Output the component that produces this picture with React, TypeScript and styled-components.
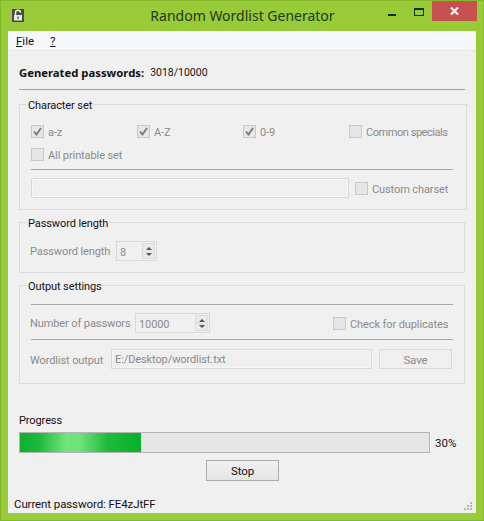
import React from "react";
import styled, { createGlobalStyle } from "styled-components";

const Global = createGlobalStyle`
  html, body {
    margin: 0;
    padding: 0;
    background: #97cb38;
  }
  * {
    box-sizing: border-box;
  }
`;

const Window = styled.div`
  width: 484px;
  height: 521px;
  display: flex;
  flex-direction: column;
  padding: 0 7px 7px;
  background: #97cb38;
  border: 1px solid #86b82e;
  font-family: Roboto, "Noto Sans", sans-serif;
  font-size: 11px;
  letter-spacing: -0.1px;
  color: #111;
`;

const TitleBar = styled.div`
  height: 30px;
  margin-right: -1px;
  display: grid;
  grid-template-columns: 1fr auto 1fr;
  flex: none;
`;

const AppIcon = styled.svg`
  width: 12px;
  height: 13px;
  margin: 8px 0 0 4px;
`;

const Title = styled.div`
  font-size: 14px;
  letter-spacing: 0;
  line-height: 30px;
  color: #22381a;
  font-family: "Noto Sans", sans-serif;
`;

const Controls = styled.div`
  display: flex;
  justify-content: flex-end;
  align-items: flex-start;
`;

const MinButton = styled.div`
  width: 8px;
  height: 2px;
  margin: 13px 18px 0 0;
  background: #1c2c10;
`;

const MaxButton = styled.div`
  width: 10px;
  height: 8px;
  margin: 7px 8px 0 0;
  border: 1px solid #1c2c10;
  border-top-width: 2px;
`;

const CloseButton = styled.div`
  width: 45px;
  height: 20px;
  background: #c75050;
  display: flex;
  align-items: center;
  justify-content: center;
`;

const Client = styled.div`
  flex: 1;
  display: flex;
  flex-direction: column;
  background: #f0f0f0;
  min-height: 0;
`;

const MenuBar = styled.div`
  height: 20px;
  flex: none;
  padding-left: 8px;
  display: flex;
  gap: 16px;
  align-items: center;
  font-size: 11.5px;
  letter-spacing: 0;
  background: linear-gradient(#f8f9fc, #f5f6f9);
  border-bottom: 1px solid #e6e6e6;
`;

const Mnemonic = styled.span`
  text-decoration: underline;
`;

const Content = styled.div`
  flex: 1;
  display: flex;
  flex-direction: column;
  padding: 0 11px;
`;

const GeneratedRow = styled.div`
  height: 39px;
  padding-top: 5px;
  display: flex;
  align-items: center;
  gap: 6px;
  flex: none;
  font-size: 10.5px;
  letter-spacing: 0;
  border-bottom: 1px solid #a0a0a0;
  width: 446px;
`;

const Strong = styled.span`
  font-family: "Noto Sans", sans-serif;
  font-size: 11.3px;
  font-weight: 700;
`;

const Group = styled.fieldset<{ $height: number; $top: number }>`
  margin: ${(p) => p.$top}px 0 0;
  padding: 0 11px;
  width: 446px;
  height: ${(p) => p.$height}px;
  border: 1px solid #dcdcdc;
  position: relative;
  flex: none;
`;

const GroupTitle = styled.legend`
  position: absolute;
  top: -6px;
  left: 7px;
  padding: 0 1px;
  line-height: 14px;
  background: #f0f0f0;
  color: #111;
`;

const CheckGrid = styled.div`
  display: grid;
  grid-template-columns: repeat(4, 106px);
  row-gap: 10px;
  padding-top: 20px;
`;

const CheckLabel = styled.label<{ $tight?: boolean }>`
  display: flex;
  align-items: flex-start;
  gap: 4px;
  height: 13px;
  line-height: 15px;
  color: #8b8b8b;
  white-space: nowrap;
  letter-spacing: ${(p) => (p.$tight ? "-0.45px" : "inherit")};
`;

const Box = styled.span`
  width: 13px;
  height: 13px;
  flex: none;
  border: 1px solid #c8c8c8;
  background: #e6e6e6;
  display: flex;
  align-items: center;
  justify-content: center;
`;

const Divider = styled.div<{ $top: number }>`
  height: 1px;
  width: 422px;
  background: #a6a6a6;
  margin-top: ${(p) => p.$top}px;
`;

const Row = styled.div<{ $top: number }>`
  display: flex;
  align-items: center;
  margin-top: ${(p) => p.$top}px;
  height: 20px;
  width: 422px;
  color: #8b8b8b;
`;

const FieldLabel = styled.span<{ $width: number; $drop?: boolean }>`
  width: ${(p) => p.$width}px;
  margin-left: -1px;
  padding-top: ${(p) => (p.$drop ? "2px" : "0")};
  flex: none;
  white-space: nowrap;
`;

const TextBox = styled.div<{ $width: number }>`
  width: ${(p) => p.$width}px;
  height: 20px;
  flex: none;
  border: 1px solid #d9d9d9;
  background: #efefef;
  padding-left: 3px;
  line-height: 20px;
  color: #8b8b8b;
  box-shadow: inset 0 0 0 1px #f6f6f6;
`;

const Spin = styled.div<{ $width: number }>`
  width: ${(p) => p.$width}px;
  height: 20px;
  flex: none;
  border: 1px solid #d9d9d9;
  display: flex;
  align-items: center;
  justify-content: space-between;
  padding: 0 1px 0 3px;
  color: #8b8b8b;
`;

const SpinValue = styled.span`
  padding-top: 2px;
`;

const SpinArrows = styled.div`
  width: 13px;
  height: 16px;
  border: 1px solid #dcdcdc;
  background: linear-gradient(#e9e9e9 0 50%, #dcdcdc 50% 56%, #e9e9e9 56%);
  display: flex;
  flex-direction: column;
  align-items: center;
  justify-content: center;
  gap: 3px;
`;

const ArrowUp = styled.span`
  border-left: 3px solid transparent;
  border-right: 3px solid transparent;
  border-bottom: 3px solid #555;
`;

const ArrowDown = styled.span`
  border-left: 3px solid transparent;
  border-right: 3px solid transparent;
  border-top: 3px solid #555;
`;

const TrailingCheck = styled.div<{ $width: number; $left?: number }>`
  width: ${(p) => p.$width}px;
  margin-left: ${(p) => (p.$left ? `${p.$left}px` : "auto")};
  flex: none;
`;

const GhostButton = styled.div`
  width: 73px;
  height: 20px;
  margin-left: 7px;
  border: 1px solid #d9d9d9;
  background: #efefef;
  color: #8b8b8b;
  text-align: center;
  line-height: 20px;
  font-size: 11.5px;
  flex: none;
`;

const ProgressLabel = styled.div`
  margin-top: 30px;
  line-height: 14px;
`;

const ProgressRow = styled.div`
  display: flex;
  align-items: center;
  gap: 5px;
  margin-top: 4px;
  font-size: 11.5px;
  letter-spacing: 0;
`;

const Track = styled.div`
  width: 411px;
  height: 21px;
  border: 1px solid #b4b4b4;
  background: #e6e6e6;
`;

const Fill = styled.div`
  height: 100%;
  background: linear-gradient(
    90deg,
    #0eb02e 0%,
    #1fb93c 16%,
    #72e47c 38%,
    #6fe07a 50%,
    #20bb3d 72%,
    #06b026 100%
  );
`;

const StopRow = styled.div`
  display: flex;
  justify-content: center;
  margin-top: 7px;
  padding-left: 1px;
`;

const StopButton = styled.div`
  width: 73px;
  height: 21px;
  border: 1px solid #acacac;
  background: linear-gradient(#f0f0f0, #e5e5e5);
  text-align: center;
  line-height: 20px;
  font-size: 11.5px;
`;

const StatusBar = styled.div`
  margin-top: auto;
  height: 20px;
  flex: none;
  padding: 1px 3px 0 6px;
  display: flex;
  align-items: center;
  justify-content: space-between;
  font-size: 11.5px;
`;

const Grip = styled.svg`
  width: 9px;
  height: 9px;
  align-self: flex-end;
  margin-bottom: 2px;
`;

const Check = ({
  checked,
  label,
  tight,
}: {
  checked?: boolean;
  label: string;
  tight?: boolean;
}) => (
  <CheckLabel $tight={tight}>
    <Box>
      {checked && (
        <svg width="9" height="9" viewBox="0 0 9 9">
          <path d="M1 4.5 L3.5 7.5 L8 1" fill="none" stroke="#777" strokeWidth="1.8" />
        </svg>
      )}
    </Box>
    {label}
  </CheckLabel>
);

const SpinBox = ({ value, width }: { value: string; width: number }) => (
  <Spin $width={width}>
    <SpinValue>{value}</SpinValue>
    <SpinArrows>
      <ArrowUp />
      <ArrowDown />
    </SpinArrows>
  </Spin>
);

export default function App() {
  return (
    <Window>
      <Global />
      <TitleBar>
        <AppIcon viewBox="0 0 12 13">
          <rect width="12" height="13" fill="#4a4a48" />
          <path d="M3.5 6 V3.8 a2.5 2.5 0 0 1 5 0" fill="none" stroke="#eee" strokeWidth="1.4" />
          <rect x="2" y="6" width="8" height="5.5" fill="#e8e8e8" />
          <rect x="5.4" y="7.5" width="1.2" height="2.5" fill="#555" />
        </AppIcon>
        <Title>Random Wordlist Generator</Title>
        <Controls>
          <MinButton />
          <MaxButton />
          <CloseButton>
            <svg width="9" height="8" viewBox="0 0 9 8">
              <path d="M1 0.5 L8 7.5 M8 0.5 L1 7.5" stroke="#fff" strokeWidth="2" />
            </svg>
          </CloseButton>
        </Controls>
      </TitleBar>
      <Client>
        <MenuBar>
          <span>
            <Mnemonic>F</Mnemonic>ile
          </span>
          <Mnemonic>?</Mnemonic>
        </MenuBar>
        <Content>
          <GeneratedRow>
            <Strong>Generated passwords:</Strong>
            <span>3018/10000</span>
          </GeneratedRow>
          <Group $top={14} $height={106}>
            <GroupTitle>Character set</GroupTitle>
            <CheckGrid>
              <Check checked label="a-z" />
              <Check checked label="A-Z" />
              <Check checked label="0-9" />
              <Check tight label="Common specials" />
              <Check label="All printable set" />
            </CheckGrid>
            <Divider $top={8} />
            <Row $top={8}>
              <TextBox $width={318} />
              <TrailingCheck $width={98} $left={6}>
                <Check label="Custom charset" />
              </TrailingCheck>
            </Row>
          </Group>
          <Group $top={12} $height={51}>
            <GroupTitle>Password length</GroupTitle>
            <Row $top={18}>
              <FieldLabel $width={86}>Password length</FieldLabel>
              <SpinBox value="8" width={41} />
            </Row>
          </Group>
          <Group $top={12} $height={99}>
            <GroupTitle>Output settings</GroupTitle>
            <Divider $top={18} />
            <Row $top={8}>
              <FieldLabel $width={105}>Number of passwors</FieldLabel>
              <SpinBox value="10000" width={75} />
              <TrailingCheck $width={120}>
                <Check label="Check for duplicates" />
              </TrailingCheck>
            </Row>
            <Divider $top={6} />
            <Row $top={9}>
              <FieldLabel $width={81} $drop>
                Wordlist output
              </FieldLabel>
              <TextBox $width={261}>E:/Desktop/wordlist.txt</TextBox>
              <GhostButton>Save</GhostButton>
            </Row>
          </Group>
          <ProgressLabel>Progress</ProgressLabel>
          <ProgressRow>
            <Track>
              <Fill style={{ width: `${(3018 / 10000) * 100 - 0.5}%` }} />
            </Track>
            <span>30%</span>
          </ProgressRow>
          <StopRow>
            <StopButton>Stop</StopButton>
          </StopRow>
        </Content>
        <StatusBar>
          <span>Current password: FE4zJtFF</span>
          <Grip viewBox="0 0 9 9">
            <g fill="#b5b5b5">
              <rect x="6" y="0" width="2" height="2" />
              <rect x="3" y="3" width="2" height="2" />
              <rect x="6" y="3" width="2" height="2" />
              <rect x="0" y="6" width="2" height="2" />
              <rect x="3" y="6" width="2" height="2" />
              <rect x="6" y="6" width="2" height="2" />
            </g>
          </Grip>
        </StatusBar>
      </Client>
    </Window>
  );
}
